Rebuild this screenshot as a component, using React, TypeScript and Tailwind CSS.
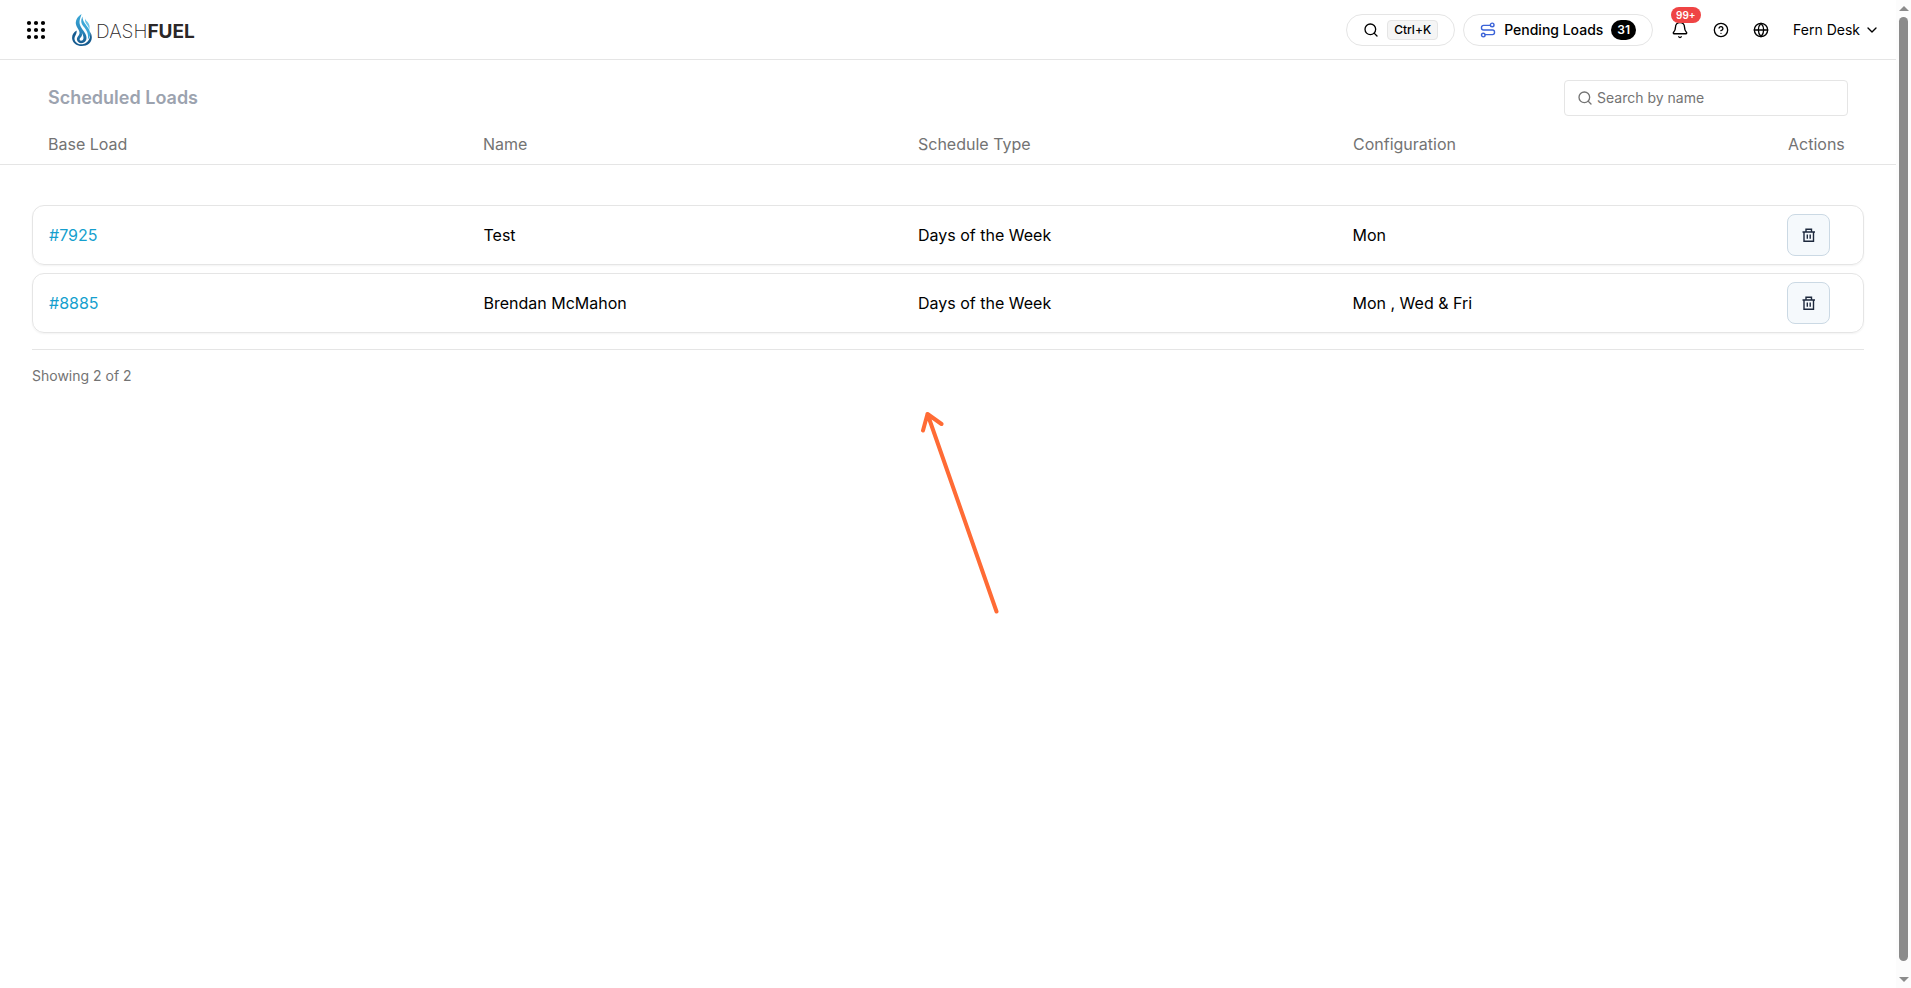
import { useState } from "react";
import { Bell, ChevronDown, CircleHelp, Globe, Search } from "lucide-react";

const loads = [
  { id: "#7925", name: "Test", type: "Days of the Week", config: "Mon" },
  {
    id: "#8885",
    name: "Brendan McMahon",
    type: "Days of the Week",
    config: "Mon , Wed & Fri",
  },
];

const columns = "grid grid-cols-[1fr_1fr_1fr_1fr_60px] items-center";

function AppsIcon() {
  const spots = [5, 12, 19];
  return (
    <svg viewBox="0 0 24 24" className="size-6" fill="currentColor">
      {spots.map((y) =>
        spots.map((x) => <circle key={`${x}-${y}`} cx={x} cy={y} r="2.1" />),
      )}
    </svg>
  );
}

function Flame() {
  return (
    <svg viewBox="0 0 20 32" className="h-8 w-5">
      <defs>
        <linearGradient id="flame" x1="0" y1="0" x2="0" y2="1">
          <stop offset="0" stopColor="#3aa9d8" />
          <stop offset="0.6" stopColor="#2a86bb" />
          <stop offset="1" stopColor="#175c90" />
        </linearGradient>
      </defs>
      {/* bowl with the left strand rising out of it */}
      <path
        fill="url(#flame)"
        d="M9.500 0C5 3 2.800 7 4.300 11.500C5.200 14.500 8 16.500 7.500 19.500C7 22 4.500 23 5 26C5.500 28.500 8 29.500 10.500 29C14.500 28 15.500 24 13.500 20C11.500 16 7.500 12.500 7.500 8C7.500 5 9 3 9.500 0Z"
      />
      <path
        fill="#175c90"
        d="M4.500 16.500C1 18.500 -.5 22 .3 25.500C1.300 29.500 5 32 9.800 32C15.500 32 19.800 28.500 19.800 23.500C19.800 21.500 19.200 19.500 18 18C18.800 23 17 28.500 11.500 30C7 31 3 29 2.500 25C2.200 22 5.500 20 4.500 16.500Z"
      />
      {/* right strands */}
      <path
        fill="#3ba6d6"
        d="M10.500 2.500C8.500 6.500 9 9.500 11.500 12.500C14.500 16 17 20 15.800 25.500C19 22 18.800 18.500 16.500 14.500C14.500 11 10.500 8 10.500 2.500Z"
      />
      <path
        fill="#6cc4e6"
        d="M13 4.500C12.500 7.500 14 9.500 15.500 11.500C16.500 13 17 14.500 17.200 16C18.200 12.500 17.500 10.500 16 8.500C15 7.200 13.500 6.200 13 4.500Z"
      />
      <path
        fill="#fff"
        d="M9.500 18.500C11 21.500 9 23 8 24.200C7 25.500 8 27 9.800 26.600C12.200 26 12 22 9.500 18.500Z"
      />
    </svg>
  );
}

function RouteIcon() {
  return (
    <svg
      viewBox="0 0 16 16"
      className="size-4 text-[#3b63d8]"
      fill="none"
      stroke="currentColor"
      strokeWidth="1.400"
      strokeLinecap="round"
      strokeLinejoin="round"
    >
      <circle cx="12.200" cy="2.900" r="1.800" />
      <circle cx="3.300" cy="13.100" r="1.800" />
      <path d="M10.400 3.400H3.500a2 2 0 0 0-2 2v.6a2 2 0 0 0 2 2h9a2 2 0 0 1 2 2v.6a2 2 0 0 1-2 2H5.100" />
    </svg>
  );
}

function TrashIcon() {
  return (
    <svg
      viewBox="0 0 14 14"
      className="size-3.5"
      fill="none"
      stroke="currentColor"
      strokeWidth="1.400"
    >
      <path d="M.5 4h12.500M4 4V1.200h5.500V4M2 4v9.200h9.500V4M5.300 6.500v4.200M8.200 6.500v4.200" />
    </svg>
  );
}

function Header() {
  return (
    <header className="flex h-15 items-center justify-between border-b border-neutral-200 pl-6 pr-4">
      <div className="flex items-center gap-6">
        <button type="button" aria-label="Apps">
          <AppsIcon />
        </button>
        <a
          href="#"
          className="flex items-center gap-1 text-[19px] text-[#2b2728]"
        >
          <Flame />
          <span className="pt-1.5">
            <span className="font-extralight">DASH</span>
            <span className="font-bold">FUEL</span>
          </span>
        </a>
      </div>
      <div className="flex items-center text-sm">
        <button
          type="button"
          aria-label="Search"
          className="mr-2 flex h-8 items-center gap-2 rounded-full border border-neutral-200 px-4"
        >
          <Search className="size-4" strokeWidth={2} />
          <kbd className="rounded border border-neutral-200 bg-neutral-100 px-1.5 text-xs leading-[18px] font-medium font-[Inter,sans-serif]">
            Ctrl+K
          </kbd>
        </button>
        <button
          type="button"
          className="flex h-8 items-center gap-2 rounded-full border border-neutral-200 px-4 font-medium"
        >
          <RouteIcon />
          Pending Loads
          <span className="rounded-full bg-black px-1.5 text-xs leading-5 font-semibold text-white">
            31
          </span>
        </button>
        <div className="ml-4.5 flex items-center gap-6">
          <button type="button" aria-label="Notifications" className="relative">
            <Bell className="size-4.5" strokeWidth={1.8} />
            <span className="absolute -top-3.5 left-0 rounded-full bg-[#ef4444] px-[5px] text-[10px] leading-4 font-semibold text-white">
              99+
            </span>
          </button>
          <button type="button" aria-label="Help">
            <CircleHelp className="size-4" />
          </button>
          <button type="button" aria-label="Language">
            <Globe className="size-4" />
          </button>
          <button type="button" className="flex items-center gap-1">
            Fern Desk
            <ChevronDown className="size-4" />
          </button>
        </div>
      </div>
    </header>
  );
}

function ScrollTrack() {
  return (
    <div className="flex w-[15px] flex-col items-center justify-between bg-[#fcfcfc] py-1.5 text-[#8b8b8b]">
      <svg viewBox="0 0 10 5" className="w-2.5" fill="currentColor">
        <path d="M0 5L5 0l5 5z" />
      </svg>
      <div className="mt-1.5 mb-4 w-[9px] flex-1 rounded-full bg-[#8b8b8b]" />
      <svg viewBox="0 0 10 5" className="w-2.5" fill="currentColor">
        <path d="M0 0l5 5 5-5z" />
      </svg>
    </div>
  );
}

export default function App() {
  const [query, setQuery] = useState("");
  const rows = loads.filter((load) =>
    load.name.toLowerCase().includes(query.toLowerCase()),
  );

  return (
    <div className="flex min-h-screen bg-white font-[Inter,sans-serif] text-black">
      <div className="relative min-w-0 flex-1">
        <Header />
        <main>
          <div className="flex items-center justify-between px-12 pt-5">
            <h1 className="text-lg font-semibold text-[#9ca3af]">
              Scheduled Loads
            </h1>
            <label className="flex h-9 w-71 items-center gap-1 rounded border border-neutral-200 px-3 text-neutral-500">
              <Search className="size-4" strokeWidth={2} />
              <input
                type="text"
                aria-label="Search by name"
                placeholder="Search by name"
                value={query}
                onChange={(e) => setQuery(e.target.value)}
                className="min-w-0 flex-1 text-sm outline-none placeholder:text-neutral-500"
              />
            </label>
          </div>
          <table className="block">
            <thead className="block border-b border-neutral-200 px-12 pt-4 pb-2 text-neutral-500">
              <tr className={`${columns} text-left`}>
                <th className="font-normal">Base Load</th>
                <th className="font-normal">Name</th>
                <th className="font-normal">Schedule Type</th>
                <th className="font-normal">Configuration</th>
                <th className="font-normal">Actions</th>
              </tr>
            </thead>
            <tbody className="flex flex-col gap-2 px-8 pt-10">
              {rows.map((load) => (
                <tr
                  key={load.id}
                  className={`${columns} h-15 rounded-xl border border-neutral-200 px-4 shadow-xs`}
                >
                  <td>
                    <a href="#" className="text-[#159fce]">
                      {load.id}
                    </a>
                  </td>
                  <td>{load.name}</td>
                  <td>{load.type}</td>
                  <td>{load.config}</td>
                  <td>
                    <button
                      type="button"
                      aria-label={`Delete ${load.id}`}
                      className="flex h-[42px] w-[43px] items-center justify-center rounded-lg border border-[#cbd9e4] bg-[#f5f9fc] text-slate-800"
                    >
                      <TrashIcon />
                    </button>
                  </td>
                </tr>
              ))}
            </tbody>
          </table>
          <p className="mx-8 mt-4 border-t border-neutral-200 pt-4 text-sm text-neutral-500">
            Showing {rows.length} of {loads.length}
          </p>
        </main>
        <svg
          viewBox="0 0 82 206"
          className="pointer-events-none absolute top-[410px] left-[920px] w-[82px]"
          fill="none"
          stroke="#ff6b35"
          strokeWidth="4"
          strokeLinecap="round"
          strokeLinejoin="round"
        >
          <path d="M76.500 201.500L7.500 4M3 20.500L7.500 4L21.500 14" />
        </svg>
      </div>
      <ScrollTrack />
    </div>
  );
}
